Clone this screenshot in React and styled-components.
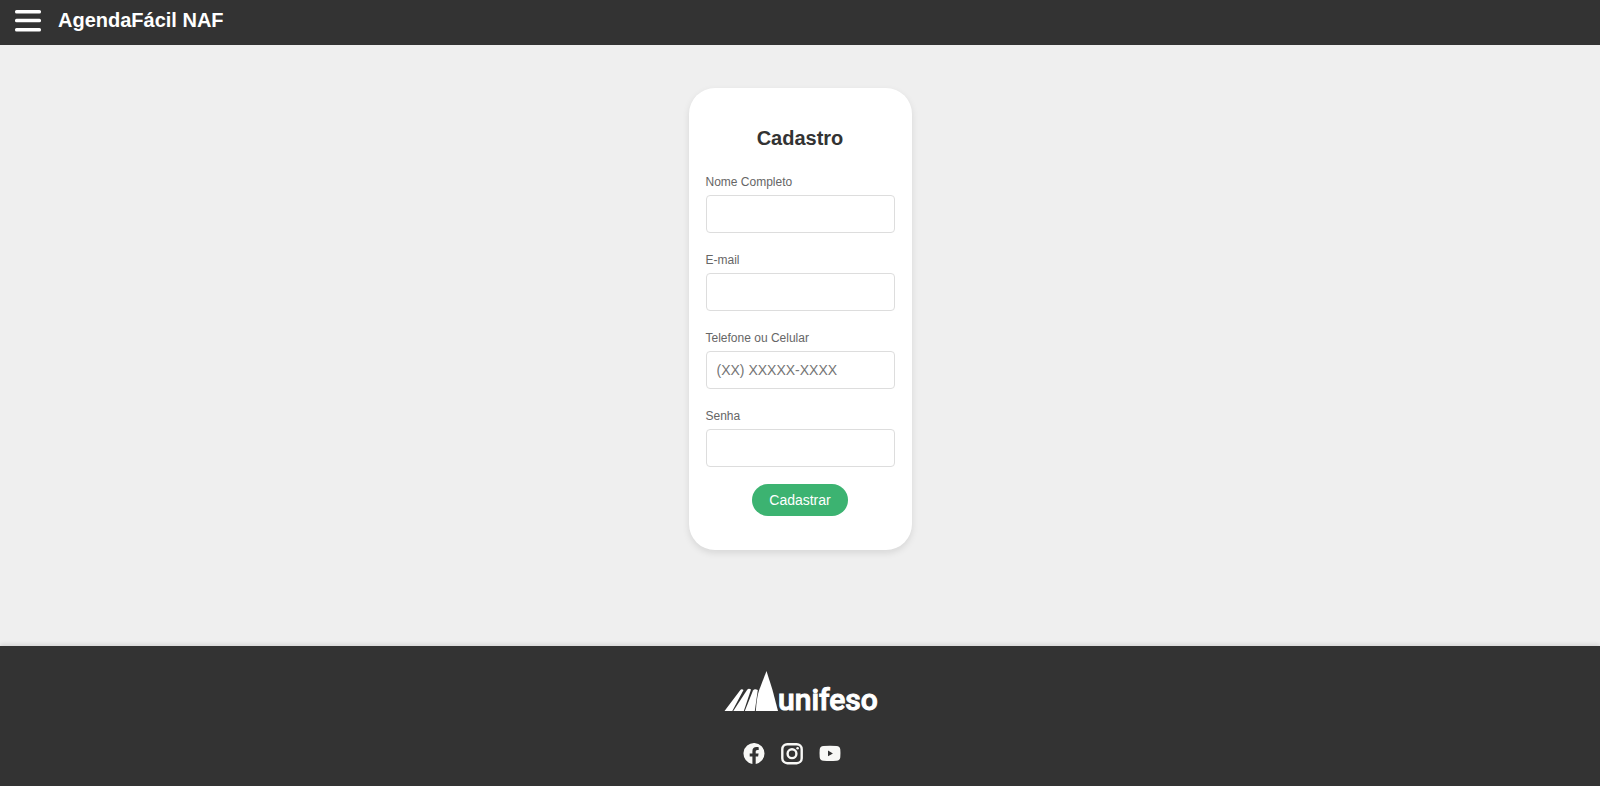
import React from 'react';
import styled, { createGlobalStyle } from 'styled-components';

const GlobalStyle = createGlobalStyle`
  * { box-sizing: border-box; }
  body {
    margin: 0;
    background: #efefef;
    font-family: 'Liberation Sans', Arial, sans-serif;
  }
`;

const Page = styled.div`
  min-height: 100vh;
  display: flex;
  flex-direction: column;
`;

const Header = styled.header`
  display: flex;
  align-items: flex-start;
  gap: 17px;
  padding: 8px 15px 13px;
  background: #333;
  color: #fff;
`;

const MenuButton = styled.button`
  display: flex;
  padding: 0;
  border: 0;
  background: none;
  color: inherit;
  cursor: pointer;
`;

const Brand = styled.h1`
  margin: 0;
  font-size: 20px;
  line-height: 24px;
`;

const Main = styled.main`
  flex: 1;
  display: flex;
  justify-content: center;
  align-items: flex-start;
  padding: 43px 16px;
`;

const Card = styled.form`
  display: flex;
  flex-direction: column;
  width: 223px;
  padding: 34px 17px;
  border-radius: 26px;
  background: #fff;
  box-shadow: 0 3px 7px rgba(0, 0, 0, 0.1);
`;

const CardTitle = styled.h2`
  margin: 0 0 18px;
  color: #333;
  font-size: 20px;
  line-height: 32px;
  text-align: center;
`;

const Field = styled.div`
  display: flex;
  flex-direction: column;
  gap: 3px;
  margin-bottom: 17px;
`;

const Label = styled.label`
  color: #666;
  font-size: 12px;
  line-height: 20px;
`;

const Input = styled.input`
  width: 100%;
  height: 38px;
  padding: 0 10px;
  border: 1px solid #ddd;
  border-radius: 4px;
  background: #fff;
  color: #333;
  font-family: inherit;
  font-size: 14px;

  &::placeholder { color: #757575; }
`;

const SubmitButton = styled.button`
  align-self: center;
  height: 32px;
  padding: 0 17px;
  border: 0;
  border-radius: 16px;
  background: #3cb371;
  color: #fff;
  font-family: inherit;
  font-size: 14px;
  cursor: pointer;
`;

const Footer = styled.footer`
  display: flex;
  flex-direction: column;
  align-items: center;
  gap: 30px;
  padding: 24px 16px 21px;
  background: #333;
  color: #fff;
  box-shadow: 0 -2px 4px rgba(0, 0, 0, 0.1);
`;

const Logo = styled.svg`
  display: block;
  width: 156px;
  height: 43px;
  overflow: visible;
`;

const Wordmark = styled.text`
  fill: #fff;
  stroke: #fff;
  font-family: Roboto, 'Liberation Sans', sans-serif;
  font-size: 30px;
  font-weight: 500;
`;

const SocialList = styled.nav`
  display: flex;
`;

const SocialLink = styled.a`
  display: flex;
  margin-right: 16px;
  color: #f8f8f6;
`;

const fields = [
  { id: 'nome', label: 'Nome Completo', type: 'text' },
  { id: 'email', label: 'E-mail', type: 'email' },
  { id: 'telefone', label: 'Telefone ou Celular', type: 'tel', placeholder: '(XX) XXXXX-XXXX' },
  { id: 'senha', label: 'Senha', type: 'password' },
];

const MenuIcon = () => (
  <svg width="26" height="24" viewBox="0 0 26 24" fill="currentColor" aria-hidden="true">
    <rect y="2" width="26" height="3.4" rx="1.5" />
    <rect y="10.8" width="26" height="3.4" rx="1.5" />
    <rect y="20" width="26" height="3.4" rx="1.5" />
  </svg>
);

const FacebookIcon = () => (
  <svg width="22" height="22" viewBox="0 0 22 22" fill="currentColor" aria-hidden="true">
    <path d="M21.5 10.5A10.5 10.5 0 1 0 9.4 20.9V13.5H6.7v-3h2.7V8.2c0-2.7 1.6-4.1 4-4.1 1.1 0 2.3.2 2.3.2v2.6h-1.3c-1.3 0-1.7.8-1.7 1.6v2h2.9l-.5 3h-2.4v7.4A10.5 10.5 0 0 0 21.5 10.5Z" />
  </svg>
);

const InstagramIcon = () => (
  <svg width="22" height="22" viewBox="0 0 22 22" fill="none" stroke="currentColor" strokeWidth="2.4" aria-hidden="true">
    <rect x="1.3" y="1.2" width="19.4" height="19" rx="5" />
    <circle cx="11" cy="10.7" r="4.4" />
    <circle cx="16.6" cy="5.2" r="1.3" fill="currentColor" stroke="none" />
  </svg>
);

const YoutubeIcon = () => (
  <svg width="22" height="22" viewBox="0 0 22 22" fill="currentColor" aria-hidden="true">
    <path fillRule="evenodd" d="M4.5 3Q11 2.4 17.5 3 21 3.2 21.3 6.5 21.7 10.5 21.3 14.2 21 17.5 17.5 17.8 11 18.4 4.5 17.8 1 17.5.7 14.2.3 10.5.7 6.5 1 3.200 4.500 3ZM9 7.500v5.800l4.900-2.900Z" />
  </svg>
);

const socials = [
  { name: 'Facebook', Icon: FacebookIcon },
  { name: 'Instagram', Icon: InstagramIcon },
  { name: 'YouTube', Icon: YoutubeIcon },
];

const UnifesoLogo = () => (
  <Logo viewBox="0 0 156 43" role="img" aria-label="unifeso">
    <g fill="#fff">
      <path d="M2.5 41 18 20.5Q19.5 18.5 21.5 20L10.3 41Z" />
      <path d="M11.3 41 25 20Q26.5 18 29 19.5L21.8 41Z" />
      <path d="M22.8 41 31 20.5Q32.5 18.5 35.8 20L32.8 41Z" />
      <path d="M33.8 41Q34.8 27 37 20.5L44.500 1 50.500 20 56 41Z" />
    </g>
    <Wordmark x="56" y="40" strokeWidth="1">unifeso</Wordmark>
  </Logo>
);

export default function App() {
  return (
    <Page>
      <GlobalStyle />
      <Header>
        <MenuButton type="button" aria-label="Menu">
          <MenuIcon />
        </MenuButton>
        <Brand>AgendaFácil NAF</Brand>
      </Header>
      <Main>
        <Card onSubmit={(event) => event.preventDefault()}>
          <CardTitle>Cadastro</CardTitle>
          {fields.map(({ id, label, type, placeholder }) => (
            <Field key={id}>
              <Label htmlFor={id}>{label}</Label>
              <Input id={id} name={id} type={type} placeholder={placeholder} />
            </Field>
          ))}
          <SubmitButton type="submit">Cadastrar</SubmitButton>
        </Card>
      </Main>
      <Footer>
        <UnifesoLogo />
        <SocialList aria-label="Redes sociais">
          {socials.map(({ name, Icon }) => (
            <SocialLink key={name} href="#" aria-label={name}>
              <Icon />
            </SocialLink>
          ))}
        </SocialList>
      </Footer>
    </Page>
  );
}
